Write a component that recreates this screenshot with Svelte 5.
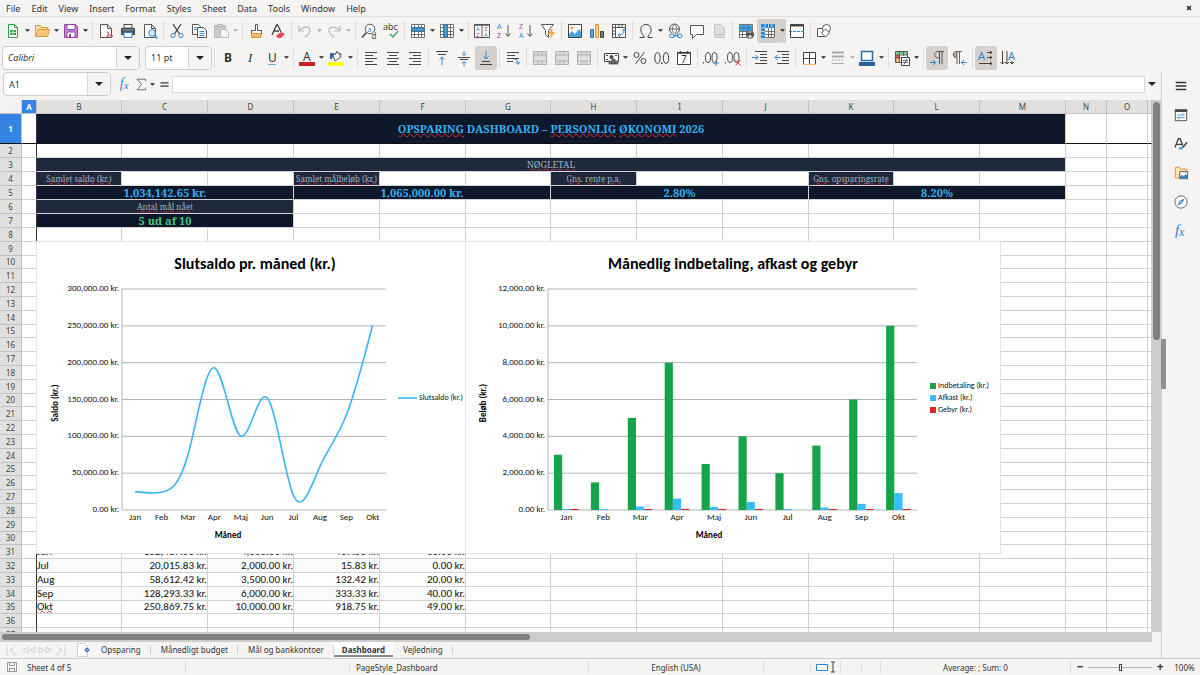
<script>
	const menus = ['File', 'Edit', 'View', 'Insert', 'Format', 'Styles', 'Sheet', 'Data', 'Tools', 'Window', 'Help'];

	const grid = '<path d="M1.5 1.5h13v13h-13zM1.5 4.5h13M1.5 8.5h13M1.5 11.5h13M4.5 1.5v13M8.5 1.5v13M11.5 1.5v13" fill="#fff" stroke="#555" stroke-width=".8"/>';
	const page = '<path d="M2.5 1.5h7l4 4v9h-11z" fill="#fff" stroke="#555"/><path d="M9.5 1.5v4h4" fill="none" stroke="#555"/>';
	const merge = '<path d="M1.5 1.5h13v13h-13z" fill="#ddd" stroke="#b0b0b0"/><path d="M1.5 5h13M1.5 11h13M6 1.5V5M10 1.5V5M6 11v3.5M10 11v3.5" stroke="#b0b0b0"/>';

	const icons = {
		'new': '<path d="M3.5 1.5h6l3 3v10h-9z" fill="#fff" stroke="#2f9e44"/><path d="M9.5 1.5v3h3" fill="none" stroke="#2f9e44"/><path d="M5 7h6v5H5z" fill="#2f9e44"/><path d="M5 9.5h6M8 7v5" stroke="#bfe6c6"/>',
		open: '<path d="M1.5 13.5v-11h5l1 2h6v3" fill="#fce0ab" stroke="#e09a3e"/><path d="M1.5 13.5l3-7h11l-2 7z" fill="#f9c877" stroke="#e09a3e"/>',
		save: '<path d="M1.5 1.5h11l2 2v11h-13z" fill="#c88bd4" stroke="#9543a4"/><path d="M4 1.5h8v5H4zM4 9h8v5.5H4z" fill="#fff" stroke="#9543a4"/><path d="M6 11h2v3H6z" fill="#9543a4"/>',
		pdf: page + '<path d="M7 15c3-2 4-5 3-6s-1 3 5 4c-3-1-5 0-8 2z" fill="none" stroke="#df4a5b"/>',
		print: '<path d="M4 1.5h8V5H4z" fill="#fff" stroke="#444"/><path d="M1 5h14v7H1z" fill="#555"/><path d="M4 9.5h8v5H4z" fill="#fff" stroke="#2e7fbf"/><path d="M3 7h10" stroke="#59b0e6"/>',
		preview: page + '<circle cx="10" cy="10" r="3.3" fill="#d5ecfa" stroke="#3a8fd0"/><path d="M12.5 12.5l3 3" stroke="#3a8fd0" stroke-width="1.5"/>',
		cut: '<path d="M4 1l6.5 10M12 1L5.5 11" stroke="#444" stroke-width="1.3"/><circle cx="4" cy="12.5" r="2.2" fill="none" stroke="#3a8fd0"/><circle cx="12" cy="12.5" r="2.2" fill="none" stroke="#3a8fd0"/>',
		copy: '<path d="M1.5 1.5h6l2 2v8h-8z" fill="#fff" stroke="#555"/><path d="M6.5 4.5h6l3 3v7h-9z" fill="#fff" stroke="#555"/><path d="M3 4.5h3M3 6.5h3M8.5 8.5h5M8.5 10.5h5M8.5 12.5h5" stroke="#3a8fd0"/>',
		paste: '<path d="M1.5 2.5h11v12h-11z" fill="#ccc" stroke="#b8b8b8"/><path d="M4.5 1.5h5v2h-5z" fill="#eee" stroke="#b0b0b0"/><path d="M7.5 6.5h5l3 3v5h-8z" fill="#f3f3f3" stroke="#bbb"/>',
		brush: '<path d="M7.5 1.5h2v6h4v3h-10v-3h4z" fill="#fff" stroke="#555"/><path d="M4 10.5h9v4H3.5z" fill="#f8b96a" stroke="#e0923a"/>',
		clear: '<path d="M2 12L6.5 2h1L11 9M4 8h5" fill="none" stroke="#444" stroke-width="1.3"/><path d="M6 13l5-4 4 2-4 4H8z" fill="#e04a52"/>',
		undo: '<path d="M2 3v5h5M2.5 7.5C6 3 12 3 13 7c.5 3-2 5-5 7" fill="none" stroke="#bbb" stroke-width="1.2"/>',
		redo: '<path d="M14 3v5H9M13.5 7.5C10 3 4 3 3 7c-.5 3 2 5 5 7" fill="none" stroke="#bbb" stroke-width="1.2"/>',
		find: '<circle cx="9" cy="6" r="4.8" fill="#fff" stroke="#555"/><path d="M5.5 9.5L1 14.5" stroke="#444" stroke-width="1.6"/><text x="6.5" y="8.5" font-size="7" fill="#2b86cf">a</text><text x="10.5" y="16" font-size="8" fill="#444">d</text>',
		spell: '<text x="0" y="7" font-size="9" fill="#444">abc</text><path d="M7 11l3 3 5-6" fill="none" stroke="#35a96b" stroke-width="1.4"/>',
		rows: grid + '<path d="M2 5h12v3H2z" fill="#4aa3df" stroke="#2272b0" stroke-width=".8"/>',
		columns: grid + '<path d="M5 2h3v12H5z" fill="#4aa3df" stroke="#2272b0" stroke-width=".8"/>',
		sort: '<path d="M.5 1.5h15v13H.5z" fill="#fff" stroke="#555"/><path d="M0 2h16" stroke="#555" stroke-width="1.5"/><path d="M8 2v13" stroke="#555"/><g font-size="6"><text x="2" y="8" fill="#2b86cf">A</text><text x="2" y="14" fill="#b33bb8">Z</text><text x="10" y="8" fill="#b33bb8">Z</text><text x="10" y="14" fill="#2b86cf">A</text></g>',
		asc: '<g font-size="7"><text x="1" y="6" fill="#2b86cf">A</text><text x="1" y="15" fill="#b33bb8">Z</text></g><path d="M12 2v11M9.5 10.5l2.5 3 2.5-3" fill="none" stroke="#555"/>',
		desc: '<g font-size="7"><text x="1" y="6" fill="#b33bb8">Z</text><text x="1" y="15" fill="#2b86cf">A</text></g><path d="M12 2v11M9.5 10.5l2.5 3 2.5-3" fill="none" stroke="#555"/>',
		filter: '<path d="M1.5 1.5h12l-5 6v7l-3-3v-4z" fill="#fff" stroke="#555"/><path d="M11 6L8 11h3l-1 5 5-7h-3l1-3z" fill="#f5a742"/>',
		image: '<path d="M1.5 1.5h13v13h-13z" fill="#fff" stroke="#444"/><path d="M2 14v-3l3-3 3 3 4-5 2 3v5z" fill="#4aa3df"/><circle cx="5" cy="5" r="1.5" fill="#f3a23e"/>',
		chart: '<path d="M1.5 6.5h3v8h-3z" fill="#57aee6" stroke="#2272b0"/><path d="M6.5 1.5h3v13h-3z" fill="#fbd08b" stroke="#e0923a"/><path d="M11.5 8.5h3v6h-3z" fill="#777" stroke="#444"/>',
		pivot: '<path d="M1.5 1.5h13v13h-13z" fill="#fff" stroke="#555"/><path d="M1.5 4.5h13M4.5 1.5v13M8 2v2M11 2v2M2 8h2M2 11h2" stroke="#555"/><path d="M7 12c5 0 6-2 6-5M11 8l2-2 2 2M9 10l-2 2 2 2" fill="none" stroke="#2b86cf"/>',
		omega: '<path d="M1.5 14.5H6V13C1 9 2 1.5 8 1.5s7 7.5 2 11.5v1.5h4.5" fill="none" stroke="#444"/>',
		link: '<circle cx="7.5" cy="6" r="5" fill="none" stroke="#555"/><path d="M2.5 6h10M7.5 1c-3 3-3 7 0 10M7.5 1c3 3 3 7 0 10" fill="none" stroke="#555" stroke-width=".8"/><path d="M3 10h5v5H3zM10 10h5v5h-5z" fill="#f5f4f3"/><rect x="2.5" y="11" width="5" height="3.5" rx="1.7" fill="none" stroke="#2b86cf"/><rect x="10" y="11" width="5" height="3.5" rx="1.7" fill="none" stroke="#2b86cf"/><path d="M6 12.8h6" stroke="#2b86cf"/>',
		comment: '<path d="M1.5 2.5h13v9h-7l-4 4v-4h-2z" fill="#fff" stroke="#555"/>',
		header: '<path d="M3.5 1.5h6l4 4v9h-10z" fill="#ddd" stroke="#c4c4c4"/><path d="M5 11.5h7" stroke="#bbb"/>',
		range: grid + '<path d="M2 2h12v6H2z" fill="#4aa3df"/><path d="M2 5h12M6 2v6M10 2v6" stroke="#2272b0" stroke-width=".8"/><path d="M8 9.5h8v4H8z" fill="#555"/><path d="M10 8h4v2h-4zM10 12h4v3h-4z" fill="#fff" stroke="#555"/>',
		freeze: grid + '<path d="M1 1h14v4H5v10H1z" fill="#2b86cf"/><path d="M1 5h4M5 1v4M8.5 1v4M12 1v4M1 8.5h4M1 12h4" stroke="#d5ecfa" stroke-width=".8"/>',
		split: '<path d="M1.5 1.5h13v13h-13z" fill="#fff" stroke="#444"/><path d="M1.5 2.5h13" stroke="#444" stroke-width="2"/><path d="M0 8.5h16" stroke="#2b86cf" stroke-dasharray="3 1"/>',
		shapes: '<path d="M1.5 5.5h8v8h-8z" fill="#fff" stroke="#555"/><circle cx="10.5" cy="5.5" r="4" fill="#fff" stroke="#555"/><path d="M9.5 6l4 4-4 4-4-4z" fill="#fff" stroke="#555"/>',
		bold: '<text x="4" y="12" font-size="12" font-weight="700">B</text>',
		italic: '<text x="6" y="12" font-size="13" font-style="italic" font-family="Liberation Serif, serif">I</text>',
		underline: '<text x="4" y="12" font-size="12">U</text><path d="M4 14.5h8" stroke="#6aaede"/>',
		color: '<text x="4" y="11" font-size="12">A</text><path d="M0 12h16v4H0z" fill="#c9211e"/>',
		highlight: '<path d="M5 5l5-3 3 5-6 4z" fill="#fff" stroke="#555"/><path d="M7 5l2-4M11 3l3 2" stroke="#555"/><path d="M2 3h4L4 9H2z" fill="#1f6eb0"/><path d="M0 12h16v4H0z" fill="#ff0"/>',
		left: '<path d="M2 2.5h12M2 5.5h8M2 8.5h12M2 11.5h8M2 14.5h12" stroke="#444"/>',
		center: '<path d="M2 2.5h12M4 5.5h8M2 8.5h12M4 11.5h8M2 14.5h12" stroke="#444"/>',
		right: '<path d="M2 2.5h12M6 5.5h8M2 8.5h12M6 11.5h8M2 14.5h12" stroke="#444"/>',
		top: '<path d="M2 1.5h12M4 4.5h8" stroke="#444"/><path d="M8 15V7M5.5 9.5L8 7l2.5 2.5" fill="none" stroke="#2b86cf"/>',
		middle: '<path d="M2 7.5h12M4 9.5h8" stroke="#444"/><path d="M8 1v4M6 3.5L8 5.5l2-2M8 16v-4M6 13.5l2-2 2 2" fill="none" stroke="#2b86cf"/>',
		bottom: '<path d="M4 11.5h8M2 14.5h12" stroke="#444"/><path d="M8 1v8M5.5 6.5L8 9l2.5-2.5" fill="none" stroke="#2b86cf"/>',
		wrap: '<path d="M2 2.5h12M2 5.5h8M2 8.5h12M2 11.5h6" stroke="#444"/><path d="M9 9c3 0 4 2 4 5M10.5 12l2.5 2.5L15 12" fill="none" stroke="#2b86cf"/>',
		merge,
		currency: '<path d="M1.5 3.5h14v8h-14z" fill="#fff" stroke="#444"/><path d="M3 5.5h2M12 5.5h2M3 9.5h2" stroke="#444"/><circle cx="8.5" cy="7" r="2" fill="#444"/><path d="M6 11h3v3H6zM9 9h3v5H9zM12 11h3v3h-3z" fill="#777" stroke="#444" stroke-width=".7"/>',
		percent: '<circle cx="4.5" cy="5" r="2.5" fill="none" stroke="#444"/><circle cx="11.5" cy="11" r="2.5" fill="none" stroke="#444"/><path d="M12.5 2l-9 12" stroke="#444"/>',
		number: '<ellipse cx="3.5" cy="8" rx="2.7" ry="5.5" fill="none" stroke="#444"/><ellipse cx="12" cy="8" rx="2.7" ry="5.5" fill="none" stroke="#444"/><path d="M7 12.5h1.5V14H7z" fill="#444"/>',
		date: '<path d="M1.5 2.5h13v12h-13z" fill="#fff" stroke="#444"/><path d="M1 3h14M4.5 1v3M11.5 1v3" stroke="#444" stroke-width="1.5"/><text x="5" y="13" font-size="10">7</text>',
		adddec: '<path d="M0 12h1v1.5H0z" fill="#444"/><ellipse cx="5" cy="7.5" rx="2.5" ry="5" fill="none" stroke="#444"/><ellipse cx="11.5" cy="7.5" rx="2.5" ry="5" fill="none" stroke="#444"/><path d="M10 13h6M13 10v6" stroke="#2b86cf"/>',
		deldec: '<path d="M0 12h1v1.5H0z" fill="#444"/><ellipse cx="5" cy="7.5" rx="2.5" ry="5" fill="none" stroke="#444"/><ellipse cx="11.5" cy="7.5" rx="2.5" ry="5" fill="none" stroke="#444"/><path d="M10.5 10l5 5.5M15.5 10l-5 5.5" stroke="#e0393e"/>',
		indent: '<path d="M3 1.5h12M8 4.5h7M8 7.5h7M8 10.5h7M3 13.5h12" stroke="#444"/><path d="M0 7.5h6M3.5 5L6 7.5 3.5 10" fill="none" stroke="#2b86cf"/>',
		outdent: '<path d="M3 1.5h12M8 4.5h7M8 7.5h7M8 10.5h7M3 13.5h12" stroke="#444"/><path d="M6.5 7.5H1M3.5 5L1 7.5 3.5 10" fill="none" stroke="#2b86cf"/>',
		borders: '<path d="M2.5 2.5h12v12h-12zM8.5 2.5v12M2.5 8.5h12" fill="#fff" stroke="#444"/><path d="M2 14.5h13" stroke="#f5b06a"/>',
		lines: '<path d="M2 2.5h12" stroke="#aaa" stroke-width="2"/><path d="M2 6.5h12" stroke="#aaa" stroke-width="2"/><path d="M2 10h12" stroke="#aaa" stroke-dasharray="2 1"/><path d="M2 13.5h12" stroke="#aaa"/>',
		bordercolor: '<path d="M2.5 1.5h11v9h-11z" fill="#fff" stroke="#2b6ea8" stroke-width="1.5"/><path d="M0 12h16v4H0z" fill="#2a6099"/>',
		conditional: '<path d="M1.5 1.5h12v11h-12z" fill="#fff" stroke="#555"/><path d="M2 2h11v3H2z" fill="#7fcf8f"/><path d="M2 5h4v3H2z" fill="#e04a52"/><path d="M2 8h4v4H2z" fill="#f5b06a"/><path d="M2 5h11M2 8h5M5.5 2v10M9.5 2v4" stroke="#555" stroke-width=".8"/><path d="M7.5 7.5h8v8h-8z" fill="#fff" stroke="#444"/><path d="M9 10.5h5M9 12.5h5M13 9l-3 5.5" stroke="#444" stroke-width=".8"/>',
		ltr: '<path d="M8 1.5h7M10.5 1.5V14M13 1.5V14M10.5 8C4 8 4 1.5 10 1.5" fill="none" stroke="#555"/><path d="M1 12.5h5M4 10l2.5 2.5L4 15" fill="none" stroke="#2b86cf"/>',
		rtl: '<path d="M2 4.5C2 2 4 1.5 6 1.5V8C4 8 2 7 2 4.5z" fill="#aaa"/><path d="M11 1.5H5.5C1 1.5 1 8 6 8M6 1.5V14M8.5 1.5V14" fill="none" stroke="#666"/><path d="M15.5 12.5H10.5M13 10l-2.5 2.5L13 15" fill="none" stroke="#2b86cf"/>',
		horizontal: '<text x="0" y="10" font-size="11" fill="#2b86cf">A</text><path d="M9 2.5h5M9 7.5h5M1 13.5h13M12 1l2 1.5-2 1.5M12 6l2 1.5-2 1.5M12 12l2 1.5-2 1.5" fill="none" stroke="#444"/>',
		vertical: '<text x="8" y="10" font-size="11" fill="#2b86cf">A</text><path d="M2.5 1v13M7 1v13M12 11v3M.5 12l2 2 2-2M5 12l2 2 2-2M10 12l2 2 2-2" fill="none" stroke="#444"/>',
		fx: '<text x="1" y="12" font-size="17" font-style="italic" font-family="Liberation Serif, serif" fill="#2b86cf">f<tspan font-size="14" dy="2">x</tspan></text>',
		sum: '<path d="M13 4V1.5H2.5L8 8l-5.5 6.5H13V12" fill="none" stroke="#555"/>',
		equals: '<path d="M3 6h10M3 10h10" stroke="#333" stroke-width="1.6"/>',
		menu: '<path d="M2 4h12M2 8h12M2 12h12" stroke="#333" stroke-width="1.6"/>',
		properties: '<path d="M1.5 2.5h13v12h-13z" fill="#fff" stroke="#444"/><path d="M1 3h14" stroke="#444" stroke-width="3"/><path d="M4 8h8M10 6l2 2M4 11h8M4 11l2 2" fill="none" stroke="#2b86cf"/>',
		styles: '<path d="M1 12L5 2h2l3 8M3 8.5h6" fill="none" stroke="#444" stroke-width="1.5"/><path d="M15 6l-5 6" stroke="#555" stroke-width="2"/><path d="M5 14c1-3 4-4 5-2s-2 3-5 2z" fill="#4aa3df"/>',
		gallery: '<path d="M1.5 13.5v-12h5l1 2h7v10z" fill="#fce0ab" stroke="#e0923a"/><path d="M6.5 6.5h9v8h-9z" fill="#fff" stroke="#444"/><path d="M7 14v-2l2-2 2 2 2-3 2 2v3z" fill="#2b86cf"/>',
		navigator: '<circle cx="8" cy="8" r="7" fill="#fff" stroke="#555"/><path d="M12 4L9.5 9.5 4 12l2.5-5.5z" fill="#2b86cf"/><circle cx="8" cy="8" r="1" fill="#fff"/>'
	};

	// "|" separates groups, "v" is a drop-down arrow, "*" marks a pressed button, "-" a disabled arrow
	const standardBar = 'new v open v save v | pdf print preview | cut copy paste - | brush clear | undo - redo - | find spell | rows v columns v | sort asc desc filter | image chart pivot | omega v link comment header | range freeze* v* split | shapes'.split(' ');
	const formatBar = 'bold italic underline v | color v highlight v | left center right | top middle bottom* | wrap | merge merge merge | currency v percent number date | adddec deldec | indent outdent | borders v lines - bordercolor v | conditional v | ltr* rtl | horizontal* vertical'.split(' ');
	const sidebar = ['menu', 'properties', 'styles', 'gallery', 'navigator', 'fx'];

	const columns = 'ABCDEFGHIJKLMNO'.split('');
	const rowNumbers = Array.from({ length: 37 }, (_, i) => i + 1);
	const typos = new Set(['OPSPARING', 'PERSONLIG', 'ØKONOMI', 'NØGLETAL', 'Samlet', 'saldo', '(kr.)', 'målbeløb', 'Gns.', 'rente', 'p.a.', 'opsparingsrate', 'Antal', 'mål', 'nået', 'Okt']);

	const blank = (count) => Array.from({ length: count }, () => ({ text: '', span: 1, style: '' }));
	const label = (text) => ({ text, span: 1, style: 'label' });
	const value = (text) => ({ text, span: 3, style: 'value' });

	const content = {
		1: [{ text: 'OPSPARING DASHBOARD – PERSONLIG ØKONOMI 2026', span: 12, style: 'title' }],
		3: [{ text: 'NØGLETAL', span: 12, style: 'label section' }],
		4: [
			label('Samlet saldo (kr.)'), ...blank(2),
			label('Samlet målbeløb (kr.)'), ...blank(2),
			label('Gns. rente p.a.'), ...blank(2),
			label('Gns. opsparingsrate')
		],
		5: [value('1,034,142.65 kr.'), value('1,065,000.00 kr.'), value('2.80%'), value('8.20%')],
		6: [{ text: 'Antal mål nået', span: 3, style: 'label' }],
		7: [{ text: '5 ud af 10', span: 3, style: 'value goal' }],
		31: month('Jun', '152,487.50', '4,000.00', '437.50', '30.00', ''),
		32: month('Jul', '20,015.83', '2,000.00', '15.83', '0.00', 'tinted'),
		33: month('Aug', '58,612.42', '3,500.00', '132.42', '20.00', ''),
		34: month('Sep', '128,293.33', '6,000.00', '333.33', '40.00', 'tinted'),
		35: month('Okt', '250,869.75', '10,000.00', '918.75', '49.00', '')
	};

	function month(name, balance, deposit, yieldAmount, fee, tint) {
		return [
			{ text: name, span: 1, style: 'name ' + tint },
			...[balance, deposit, yieldAmount, fee].map((n) => ({ text: n + ' kr.', span: 1, style: 'amount ' + tint }))
		];
	}

	function rowCells(n) {
		const cells = content[n] || [];
		const used = cells.reduce((sum, c) => sum + c.span, 0);
		return [...cells, ...blank(15 - used)];
	}

	const months = ['Jan', 'Feb', 'Mar', 'Apr', 'Maj', 'Jun', 'Jul', 'Aug', 'Sep', 'Okt'];
	const balances = [25000, 24000, 74000, 193000, 100500, 152487, 20015, 58612, 128293, 250869];
	const series = [
		{ name: 'Indbetaling (kr.)', color: '#16a34a', values: [3000, 1500, 5000, 8000, 2500, 4000, 2000, 3500, 6000, 10000] },
		{ name: 'Afkast (kr.)', color: '#38bdf8', values: [60, 35, 190, 620, 160, 437, 16, 132, 333, 919] },
		{ name: 'Gebyr (kr.)', color: '#dc2626', values: [50, 0, 45, 60, 20, 30, 0, 20, 40, 49] }
	];

	const plotTop = 47;
	const plotBottom = 268;
	const plotHeight = plotBottom - plotTop;
	const ticks = [0, 1, 2, 3, 4, 5, 6];
	const tickY = (t) => plotBottom - (t * plotHeight) / 6;
	const money = (n) => n.toLocaleString('en-US', { minimumFractionDigits: 2 }) + ' kr.';

	// natural cubic spline through equally spaced points
	function splinePath(values, x0, step) {
		const y = values.map((v) => plotBottom - (v / 300000) * plotHeight);
		const last = y.length - 1;
		const c = Array(last + 1).fill(0);
		const d = Array(last + 1).fill(0);
		const m = Array(last + 1).fill(0);
		for (let i = 1; i < last; i++) {
			const p = 4 - c[i - 1];
			c[i] = 1 / p;
			d[i] = (6 * (y[i + 1] - 2 * y[i] + y[i - 1]) - d[i - 1]) / p;
		}
		for (let i = last - 1; i > 0; i--) m[i] = d[i] - c[i] * m[i + 1];

		let path = `M${x0} ${y[0]}`;
		for (let i = 0; i < last; i++) {
			const start = y[i + 1] - y[i] - (2 * m[i] + m[i + 1]) / 6;
			const end = y[i + 1] - y[i] + (m[i] + 2 * m[i + 1]) / 6;
			const x = x0 + i * step;
			path += `C${x + step / 3} ${y[i] + start / 3} ${x + (2 * step) / 3} ${y[i + 1] - end / 3} ${x + step} ${y[i + 1]}`;
		}
		return path;
	}

	const curve = splinePath(balances, 98, 26.4);

	let fontName = $state('Calibri');
	let fontSize = $state('11 pt');
	let cellName = $state('A1');
	let formula = $state('');
	let activeTab = $state('Dashboard');
	let zoom = $state(50);
	const tabs = ['Opsparing', 'Månedligt budget', 'Mål og bankkontoer', 'Dashboard', 'Vejledning'];
</script>

{#snippet icon(name)}
	<svg class="icon" viewBox="0 0 16 16" aria-hidden="true">{@html icons[name]}</svg>
{/snippet}

{#snippet caret()}
	<svg class="caret" viewBox="0 0 8 4" aria-hidden="true"><path d="M0 0h8L4 4z" /></svg>
{/snippet}

{#snippet toolbar(items)}
	{#each items as item}
		{@const name = item.replace('*', '')}
		{#if name === '|'}
			<span class="sep"></span>
		{:else if name === 'v' || name === '-'}
			<button class="arrow" class:pressed={item.endsWith('*')} disabled={name === '-'} aria-label="More options">{@render caret()}</button>
		{:else}
			<button class="tool" class:pressed={item.endsWith('*')} aria-label={name}>{@render icon(name)}</button>
		{/if}
	{/each}
{/snippet}

{#snippet words(text)}
	{#each text.split(' ') as word, i}{i > 0 ? ' ' : ''}{#if typos.has(word)}<span class="typo">{word}</span>{:else}{word}{/if}{/each}
{/snippet}

{#snippet axes(left, right, max)}
	{#each ticks as t}
		<line x1={left} x2={right} y1={tickY(t)} y2={tickY(t)} stroke="#b3b3b3" />
		<text class="tick" x={left - 3} y={tickY(t) + 2} text-anchor="end">{money((max / 6) * t)}</text>
	{/each}
	<line x1={left} x2={left} y1={plotTop} y2={plotBottom} stroke="#b3b3b3" />
	{#each months as m, i}
		<text class="tick" x={left + ((right - left) / 10) * (i + 0.5)} y={plotBottom + 10} text-anchor="middle">{m}</text>
	{/each}
{/snippet}

<div class="app">
	<nav class="menubar">
		{#each menus as menu}
			<button>{menu}</button>
		{/each}
		<button class="close" aria-label="Close document">
			<svg viewBox="0 0 6 6" aria-hidden="true"><path d="M1 1l4 4M5 1L1 5" stroke="#222" stroke-width="1.5" /></svg>
		</button>
	</nav>

	<div class="toolbar">{@render toolbar(standardBar)}</div>

	<div class="toolbar">
		<div class="combo font-name">
			<input aria-label="Font name" bind:value={fontName} />
			<button aria-label="Choose font">{@render caret()}</button>
		</div>
		<div class="combo font-size">
			<input aria-label="Font size" bind:value={fontSize} />
			<button aria-label="Choose size">{@render caret()}</button>
		</div>
		<span class="sep"></span>
		{@render toolbar(formatBar)}
	</div>

	<div class="workspace">
		<main>
			<div class="formula-bar">
				<div class="combo cell-name">
					<input aria-label="Name box" bind:value={cellName} />
					<button aria-label="Manage names">{@render caret()}</button>
				</div>
				<button class="small" aria-label="Function wizard">{@render icon('fx')}</button>
				<button class="small" aria-label="Select function">{@render icon('sum')}</button>
				<button class="arrow" aria-label="More functions">{@render caret()}</button>
				<button class="small" aria-label="Formula">{@render icon('equals')}</button>
				<input class="formula" aria-label="Input line" bind:value={formula} />
				<button class="expand" aria-label="Expand formula bar">{@render caret()}</button>
			</div>

			<div class="sheet-area">
				<div class="sheet">
					<table>
						<colgroup>
							<col class="row-head" />
							<col class="col-a" />
							<col class="col-wide slim" />
							{#each { length: 11 } as _, i}
								<col class="col-wide" class:slim={i === 4 || i === 8} />
							{/each}
							<col class="col-narrow" />
							<col class="col-narrow" />
							<col />
						</colgroup>
						<thead>
							<tr>
								<td class="corner"></td>
								{#each columns as col}
									<th class:current={col === 'A'}>{col}</th>
								{/each}
								<th></th>
							</tr>
						</thead>
						<tbody>
							{#each rowNumbers as n}
								<tr class:first={n === 1} class:short={n > 9 && n % 5 === 0}>
									<th class:current={n === 1}>{n}</th>
									<td class="frozen"></td>
									{#each rowCells(n) as cell}
										<td class={cell.style} colspan={cell.span}>{@render words(cell.text)}</td>
									{/each}
								</tr>
							{/each}
						</tbody>
					</table>

					<div class="charts">
						<svg class="chart" width="429" height="311" viewBox="0 0 429 311">
							<text class="chart-title" x="218" y="27" text-anchor="middle">Slutsaldo pr. måned (kr.)</text>
							{@render axes(85, 349, 300000)}
							<path d={curve} fill="none" stroke="#38b6f0" stroke-width="1.6" />
							<text class="axis-title" x="191" y="296" text-anchor="middle">Måned</text>
							<text class="axis-title" transform="translate(21 161) rotate(-90)" text-anchor="middle">Saldo (kr.)</text>
							<line x1="361" x2="380" y1="156" y2="156" stroke="#38bdf8" stroke-width="1.6" />
							<text class="legend" x="382" y="158">Slutsaldo (kr.)</text>
						</svg>
						<svg class="chart" width="534" height="311" viewBox="0 0 534 311">
							<text class="chart-title" x="267" y="27" text-anchor="middle">Månedlig indbetaling, afkast og gebyr</text>
							{@render axes(82, 451, 12000)}
							{#each series as s, k}
								{#each s.values as v, i}
									{@const h = v > 0 ? Math.max((v / 12000) * plotHeight, 1) : 0}
									<rect x={88 + i * 36.9 + k * 8.2} y={plotBottom - h} width="8.2" height={h} fill={s.color} />
								{/each}
								<rect x="464" y={141 + k * 12} width="6" height="6" fill={s.color} />
								<text class="legend" x="472" y={146 + k * 12}>{s.name}</text>
							{/each}
							<text class="axis-title" x="243" y="296" text-anchor="middle">Måned</text>
							<text class="axis-title" transform="translate(20 161) rotate(-90)" text-anchor="middle">Beløb (kr.)</text>
						</svg>
					</div>
				</div>
				<div class="scroll-y"><div class="thumb"></div></div>
			</div>

			<div class="scroll-x"><div class="thumb"></div></div>

			<div class="tabs">
				<svg class="tab-nav" viewBox="0 0 60 12" aria-hidden="true">
					<path d="M1 1v10M10 1L4 6l6 5M22 3l-5 3 5 3zM29 3l-5 3 5 3zM33 3l5 3-5 3zM40 3l5 3-5 3zM50 1l6 5-6 5M59 1v10" />
				</svg>
				<button class="add" aria-label="Add sheet">
					<svg viewBox="0 0 13 14" aria-hidden="true">
						<path d="M.5 .5h7l3 3v10H.5z" fill="#fff" stroke="#d2d0ce" />
						<circle cx="10" cy="7" r="1.7" fill="#fff" stroke="#2a6fc0" />
						<path d="M10 4.5v5M7.5 7h5" stroke="#2a6fc0" stroke-width=".7" />
					</svg>
				</button>
				{#each tabs as tab}
					<button class="tab" class:active={tab === activeTab} onclick={() => (activeTab = tab)}>{tab}</button>
				{/each}
			</div>
		</main>

		<aside>
			<div class="grip"></div>
			{#each sidebar as name}
				<button aria-label={name}>{@render icon(name)}</button>
			{/each}
		</aside>
	</div>

	<footer>
		<div class="sheet-count">
			<svg viewBox="0 0 12 12" aria-hidden="true"><path d="M1.5 1.5h9v9h-9zM3.5 1.5v3h5v-3M3.5 10.5v-3h5v3" fill="none" stroke="#999" /></svg>
			Sheet 4 of 5
		</div>
		<div></div>
		<div class="page-style">PageStyle_Dashboard</div>
		<div>English (USA)</div>
		<div></div>
		<div class="mode">
			<svg viewBox="0 0 20 12" aria-hidden="true">
				<path d="M.5 3.5h11v6H.5z" fill="#fff" stroke="#2b86cf" />
				<path d="M15 1h4M15 11h4M17 1v10" stroke="#444" />
			</svg>
		</div>
		<div></div>
		<div></div>
		<div>Average: ; Sum: 0</div>
		<div class="zoom">
			<button aria-label="Zoom out">−</button>
			<input type="range" min="0" max="100" aria-label="Zoom" bind:value={zoom} />
			<button aria-label="Zoom in">+</button>
			<span>100%</span>
		</div>
	</footer>
</div>

<style>
	:global(body) {
		margin: 0;
	}

	.app {
		display: flex;
		flex-direction: column;
		height: 100vh;
		overflow: hidden;
		background: #f5f4f2;
		color: #333;
		font-family: 'Noto Sans', sans-serif;
		font-size: 9px;
	}

	button,
	input {
		margin: 0;
		padding: 0;
		border: none;
		background: none;
		color: inherit;
		font: inherit;
	}

	button {
		display: flex;
		align-items: center;
		justify-content: center;
		flex: none;
	}

	.menubar {
		display: flex;
		align-items: center;
		gap: 11px;
		height: 16px;
		flex: none;
		padding: 0 8px 0 6px;
		border-bottom: 1px solid #e2e1df;
	}

	.close {
		margin-left: auto;
	}

	.close svg {
		width: 6px;
		height: 6px;
	}

	.toolbar {
		display: flex;
		align-items: center;
		flex: none;
		height: 27px;
		padding-left: 2px;
	}

	.tool {
		width: 22px;
		height: 24px;
		border-radius: 3px;
	}

	.arrow {
		width: 7px;
		height: 24px;
	}

	.arrow .caret {
		width: 5px;
		height: 3px;
	}

	.arrow:disabled {
		opacity: 0.35;
	}

	.pressed {
		background: #d3d0cd;
	}

	.icon {
		width: 16px;
		height: 16px;
		overflow: visible;
		fill: #333;
	}

	.caret {
		width: 8px;
		height: 4px;
		fill: #222;
	}

	.sep {
		flex: none;
		width: 5px;
		height: 20px;
		background: linear-gradient(#e0dfdd, #e0dfdd) center / 1px 100% no-repeat;
	}

	.arrow + .sep {
		width: 6px;
	}

	.combo {
		display: flex;
		flex: none;
		box-sizing: border-box;
		height: 24px;
		border: 1px solid #cfccc9;
		border-radius: 4px;
		background: #fff;
		overflow: hidden;
	}

	.combo input {
		flex: 1;
		min-width: 0;
		padding: 0 5px;
	}

	.combo button {
		width: 23px;
		border-left: 1px solid #dad7d4;
		background: #f5f4f2;
	}

	.font-name {
		width: 138px;
		margin-right: 5px;
		font-style: italic;
	}

	.font-size {
		width: 67px;
	}

	.cell-name {
		width: 108px;
		margin-right: 6px;
	}

	.workspace {
		display: flex;
		flex: 1;
		min-height: 0;
	}

	main {
		display: flex;
		flex-direction: column;
		flex: 1;
		min-width: 0;
	}

	.formula-bar {
		display: flex;
		align-items: center;
		flex: none;
		height: 26px;
		padding: 0 3px 3px;
	}

	.small {
		width: 16px;
	}

	.small .icon {
		width: 13px;
		height: 13px;
	}

	.formula {
		flex: 1;
		min-width: 0;
		height: 17px;
		box-sizing: border-box;
		border: 1px solid #dad8d6;
		background: #fff;
	}

	.expand {
		width: 13px;
	}

	.sheet-area {
		display: flex;
		flex: 1;
		min-height: 0;
	}

	.sheet {
		position: relative;
		flex: 1;
		min-width: 0;
		overflow: hidden;
		background: #fff;
	}

	table {
		width: 100%;
		table-layout: fixed;
		border-collapse: separate;
		border-spacing: 0;
	}

	.row-head {
		width: 22px;
	}

	.col-a {
		width: 15px;
	}

	.col-wide {
		width: 86px;
	}

	.col-wide.slim {
		width: 85px;
	}

	.col-narrow {
		width: 41px;
	}

	th,
	td {
		box-sizing: border-box;
		height: 14px;
		padding: 0;
		border-right: 1px solid #d2d2d2;
		border-bottom: 1px solid #d2d2d2;
		line-height: 12px;
		text-align: center;
		white-space: nowrap;
		overflow: hidden;
	}

	th {
		border-color: #c4c3c1;
		background: #e1e0de;
		color: #444;
		font-size: 8px;
		font-weight: 400;
	}

	.corner {
		background: #f5f4f2;
		border-bottom-color: #c4c3c1;
	}

	.short th,
	.short td {
		height: 13px;
	}

	.first th,
	.first td {
		height: 30px;
		border-bottom-color: #111;
	}

	th.current {
		background: #3584e4;
		color: #fff;
		font-weight: 700;
	}

	.frozen {
		border-right-color: #333;
	}

	.title,
	.label,
	.value {
		font-family: 'Noto Serif', 'DejaVu Serif Condensed', 'DejaVu Serif', serif;
	}

	.title {
		background: #0f172a;
		color: #38b0ee;
		font-size: 11px;
		font-weight: 700;
	}

	.label {
		background: #1e293b;
		color: #a3afbf;
		font-size: 8px;
	}

	.section {
		font-size: 9px;
	}

	.value {
		background: #0f172a;
		color: #38b0ee;
		font-size: 11px;
		font-weight: 700;
	}

	.goal {
		color: #4ac47a;
	}

	.typo {
		text-decoration: underline wavy #d02a3a 1px;
		text-decoration-skip-ink: none;
		text-underline-offset: 0;
	}

	.name,
	.amount {
		color: #111;
		font-family: Carlito, Lato, sans-serif;
		font-size: 11px;
	}

	.name {
		text-align: left;
	}

	.amount {
		text-align: right;
	}

	.tinted {
		background: #f8fafc;
	}

	/* charts float over the grid, anchored at B9 */
	.charts {
		position: absolute;
		top: 142px;
		left: 37px;
		display: flex;
		font-family: Carlito, Lato, sans-serif;
	}

	.chart {
		box-sizing: border-box;
		flex: none;
		background: #fff;
		box-shadow: 0 0 0 1px #e4e4e4;
	}

	.chart-title {
		font-size: 16px;
		font-weight: 700;
		fill: #000;
	}

	.tick {
		font-size: 9px;
		fill: #111;
	}

	.legend {
		font-size: 8px;
		fill: #111;
	}

	.axis-title {
		font-size: 9px;
		font-weight: 700;
		fill: #000;
	}

	.scroll-y {
		flex: none;
		width: 9px;
		box-sizing: border-box;
		padding: 2px 1px;
		background: #cdcdcd;
	}

	.scroll-y .thumb {
		height: 45%;
		border-radius: 4px;
		background: #7f7f7f;
	}

	.scroll-x {
		flex: none;
		height: 10px;
		box-sizing: border-box;
		margin-right: 9px;
		padding: 2px;
		background: #cdcdcd;
	}

	.scroll-x .thumb {
		width: 46%;
		height: 6px;
		border-radius: 3px;
		background: #7f7f7f;
	}

	.tabs {
		display: flex;
		flex: none;
		height: 16px;
		padding-left: 6px;
		font-size: 8px;
	}

	.tab-nav {
		width: 60px;
		height: 12px;
		margin: 2px 9px 0 0;
		fill: none;
		stroke: #d2d0ce;
	}

	.add {
		width: 16px;
	}

	.add svg {
		width: 13px;
		height: 14px;
	}

	.tab {
		height: 15px;
		padding: 0 10px;
		background: linear-gradient(#cfcdcb, #cfcdcb) right center / 1px 8px no-repeat;
	}

	.tab.active {
		padding: 2px 8px 0;
		box-sizing: border-box;
		border-bottom: 2px solid #8b8b8b;
		background: #fff;
		font-weight: 700;
	}

	aside {
		position: relative;
		display: flex;
		flex-direction: column;
		flex: none;
		width: 38px;
		border-left: 1px solid #d5d3d1;
	}

	aside button {
		height: 29px;
	}

	aside .icon {
		width: 14px;
		height: 14px;
	}

	.grip {
		position: absolute;
		top: 268px;
		left: -1px;
		width: 5px;
		height: 50px;
		background: #8f8f8f;
	}

	footer {
		display: grid;
		grid-template-columns: 186fr 164fr 239fr 175fr 47fr 30fr 21fr 19fr 190fr 129fr;
		align-items: center;
		flex: none;
		height: 16px;
		border-top: 1px solid #d0cecc;
		font-size: 8px;
	}

	footer > div {
		display: flex;
		align-items: center;
		justify-content: center;
		box-sizing: border-box;
		height: 12px;
		border-right: 1px solid #e0dfdd;
	}

	footer > .sheet-count {
		justify-content: flex-start;
		gap: 9px;
		padding-left: 6px;
	}

	.sheet-count svg {
		width: 12px;
		height: 12px;
	}

	footer > .page-style {
		justify-content: flex-start;
		padding-left: 6px;
	}

	.mode svg {
		width: 20px;
		height: 12px;
	}

	footer > .zoom {
		gap: 4px;
		border-right: none;
	}

	.zoom button {
		width: 8px;
		font-size: 12px;
		font-weight: 700;
		line-height: 12px;
	}

	.zoom input {
		appearance: none;
		width: 64px;
		height: 7px;
		background: linear-gradient(#b5b3b1, #b5b3b1) center / 100% 1px no-repeat;
	}

	.zoom input::-webkit-slider-thumb {
		appearance: none;
		width: 3px;
		height: 7px;
		border: 1px solid #444;
		background: #eee;
	}

	.zoom span {
		margin-left: 6px;
	}
</style>
